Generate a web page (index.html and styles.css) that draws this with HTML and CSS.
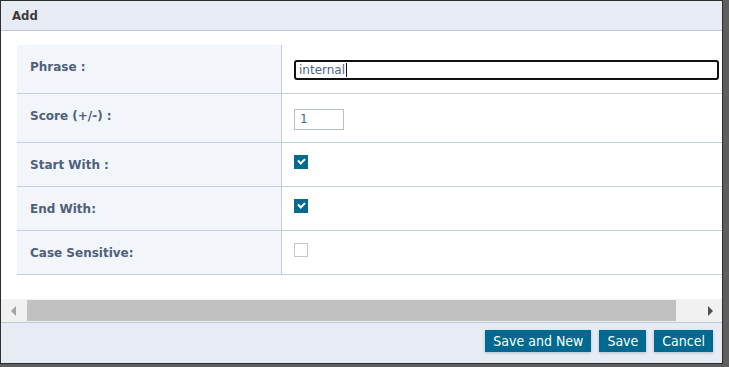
FILE: index.html
```html
<!DOCTYPE html>
<html lang="en">
<head>
    <meta charset="UTF-8">
    <title>Add</title>
    <link rel="stylesheet" href="styles.css">
</head>
<body>

    <div class="dialog">
        <div class="dialog-title">Add</div>

        <div class="dialog-body">
            <table class="form-table">
                <tr class="row-phrase">
                    <td class="label">Phrase :</td>
                    <td class="field"><div class="phrase-input">internal<span class="caret"></span></div></td>
                </tr>
                <tr class="row-score">
                    <td class="label">Score (+/-) :</td>
                    <td class="field"><div class="score-input">1</div></td>
                </tr>
                <tr class="row-check">
                    <td class="label">Start With :</td>
                    <td class="field"><span class="checkbox checked"></span></td>
                </tr>
                <tr class="row-check">
                    <td class="label">End With:</td>
                    <td class="field"><span class="checkbox checked"></span></td>
                </tr>
                <tr class="row-check">
                    <td class="label">Case Sensitive:</td>
                    <td class="field"><span class="checkbox"></span></td>
                </tr>
            </table>
        </div>

        <div class="hscroll">
            <div class="scroll-btn"><span class="arrow arrow-left"></span></div>
            <div class="thumb"></div>
            <div class="scroll-space"></div>
            <div class="scroll-btn right"><span class="arrow arrow-right"></span></div>
        </div>

        <div class="dialog-footer">
            <button class="btn">Save and New</button>
            <button class="btn">Save</button>
            <button class="btn">Cancel</button>
        </div>
    </div>

</body>
</html>
```

FILE: styles.css
```css
body {
    margin: 0;
    padding: 0;
    width: 729px;
    height: 367px;
    background-color: #5e5e5e;
    font-family: "DejaVu Sans", Verdana, sans-serif;
    overflow: hidden;
}

.dialog {
    width: 721px;
    height: 362px;
    border: 1px solid #2e2e2e;
    background-color: #fff;
    display: flex;
    flex-direction: column;
}

.dialog-title {
    height: 29px;
    line-height: 29px;
    padding-left: 11px;
    background-color: #e7ecf4;
    border-bottom: 1px solid #b9c8dc;
    font-family: "DejaVu Sans Condensed", "DejaVu Sans", sans-serif;
    font-weight: bold;
    font-size: 13px;
    color: #3b3b3b;
}

.dialog-body {
    height: 253px;
    padding: 14px 0 0 16px;
    overflow: hidden;
}

.form-table {
    width: 760px;
    border-collapse: collapse;
}

.form-table td {
    vertical-align: top;
    border-bottom: 1px solid #c3cfdc;
    padding: 0;
}

.form-table .label {
    width: 251px;
    padding: 15px 0 0 13px;
    background-color: #f2f5f9;
    border-right: 1px solid #c3cfdc;
    font-size: 12px;
    font-weight: bold;
    color: #4f6079;
}

.form-table .field {
    padding-left: 12px;
}

.row-phrase td {
    height: 33px;
}

.row-phrase .field {
    padding-top: 15px;
}

.row-score td {
    height: 33px;
}

.row-score .field {
    padding-top: 15px;
}

.row-check td {
    height: 28px;
}

.row-check .field {
    padding-top: 12px;
}

.phrase-input {
    box-sizing: border-box;
    width: 425px;
    height: 20px;
    padding: 0 3px;
    border: 2px solid #111;
    border-radius: 3px;
    font-size: 12px;
    line-height: 16px;
    color: #4e6580;
}

.caret {
    display: inline-block;
    width: 1px;
    height: 14px;
    margin-left: 1px;
    vertical-align: -3px;
    background-color: #111;
}

.score-input {
    box-sizing: border-box;
    width: 50px;
    height: 21px;
    padding: 0 5px;
    border: 1px solid #b4c0cc;
    font-size: 12px;
    line-height: 19px;
    color: #4e6580;
}

.checkbox {
    display: block;
    box-sizing: border-box;
    width: 14px;
    height: 14px;
    border: 1px solid #bfc8d5;
    background-color: #fff;
    position: relative;
}

.checkbox.checked {
    background-color: #066a8f;
    border-color: #066a8f;
}

.checkbox.checked::after {
    content: "";
    position: absolute;
    left: 3px;
    top: 2px;
    width: 5px;
    height: 3px;
    border-left: 2px solid #fff;
    border-bottom: 2px solid #fff;
    transform: rotate(-45deg);
}

.hscroll {
    height: 23px;
    margin-top: 1px;
    display: flex;
    align-items: center;
    background-color: #f1f1f1;
}

.scroll-btn {
    width: 26px;
    display: flex;
    justify-content: center;
}

.scroll-btn.right {
    width: 24px;
}

.thumb {
    width: 649px;
    height: 21px;
    background-color: #c1c1c1;
}

.scroll-space {
    flex: 1;
}

.arrow {
    width: 0;
    height: 0;
    border-top: 5px solid transparent;
    border-bottom: 5px solid transparent;
}

.arrow-left {
    margin-right: 2px;
    border-right: 5px solid #a3a3a3;
}

.arrow-right {
    border-left: 5px solid #505050;
}

.dialog-footer {
    flex: 1;
    display: flex;
    justify-content: flex-end;
    align-items: flex-start;
    gap: 8px;
    padding: 7px 9px 0 0;
    background-color: #e7ecf4;
    border-top: 1px solid #b6cadc;
}

.btn {
    height: 22px;
    padding: 0 8px;
    border: none;
    background-color: #006990;
    color: #fff;
    font-family: "DejaVu Sans Condensed", "DejaVu Sans", sans-serif;
    font-size: 14px;
    box-shadow: 0 1px 3px rgba(0, 60, 100, 0.25);
    cursor: pointer;
}
```
